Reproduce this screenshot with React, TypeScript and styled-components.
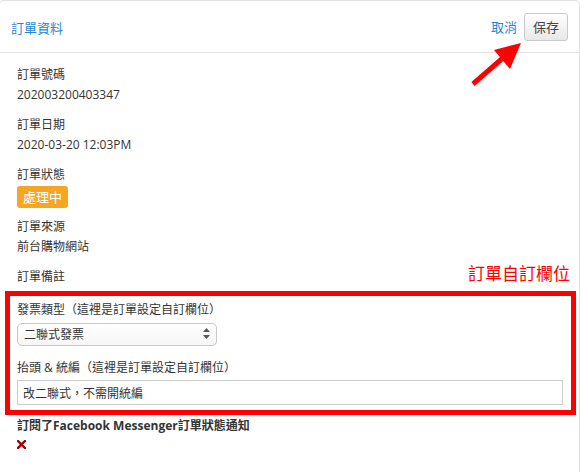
import React from 'react';
import styled, { createGlobalStyle } from 'styled-components';

const Global = createGlobalStyle`
  html, body {
    margin: 0;
    padding: 0;
    background: #fff;
  }
  body {
    font-family: "Open Sans", "Noto Sans CJK TC", sans-serif;
    color: #333;
  }
`;

const Panel = styled.div`
  position: relative;
  width: 581px;
  height: 480px;
  margin-left: -1px;
  box-sizing: border-box;
  border: 1px solid #e2e2e2;
  border-radius: 4px 4px 0 0;
  background: #fff;
`;

const Header = styled.div`
  display: flex;
  align-items: center;
  justify-content: space-between;
  height: 51px;
  padding: 0 11px 0 11px;
  border-bottom: 1px solid #e5e5e5;
`;

const Title = styled.div`
  font-size: 13px;
  color: #1f87d8;
  padding-top: 1px;
`;

const Actions = styled.div`
  display: flex;
  align-items: center;
  gap: 7px;
`;

const LinkButton = styled.span`
  font-size: 13px;
  color: #1f87d8;
  cursor: pointer;
`;

const SaveButton = styled.button`
  width: 44px;
  height: 28px;
  padding: 0;
  font-family: inherit;
  font-size: 13px;
  color: #444;
  background: linear-gradient(#fff, #e8e8e8);
  border: 1px solid #cacaca;
  border-radius: 3px;
  cursor: pointer;
`;

const Body = styled.div`
  padding: 12px 12px 0 17px;
`;

const Field = styled.div`
  margin-bottom: 10px;
`;

const LabelRow = styled.div`
  display: flex;
  align-items: center;
  justify-content: space-between;
`;

const Label = styled.div<{ $bold?: boolean }>`
  font-size: 12px;
  line-height: 20px;
  font-weight: ${(p) => (p.$bold ? 700 : 400)};
`;

const Value = styled.div`
  font-size: 12px;
  line-height: 20px;
`;

const Note = styled.div`
  font-size: 17px;
  line-height: 20px;
  color: #f00;
  margin-right: -3px;
  margin-top: -6px;
`;

const Badge = styled.span`
  display: inline-flex;
  align-items: center;
  height: 22px;
  padding: 0 6px;
  margin-bottom: -2px;
  font-size: 13px;
  color: #fff;
  background: #f5a623;
  border-radius: 3px;
`;

const CustomBox = styled.div`
  margin: 4px -9px 1px -12px;
  padding: 4px 8px 5px 7px;
  border: 5px solid #f00;
`;

const CustomField = styled.div<{ $last?: boolean }>`
  margin-bottom: ${(p) => (p.$last ? 0 : 12)}px;
`;

const InputLabel = styled.div`
  font-size: 12px;
  line-height: 20px;
  margin-bottom: 2px;
`;

const SelectWrap = styled.div`
  position: relative;
  width: 200px;
`;

const Select = styled.select`
  appearance: none;
  width: 100%;
  height: 23px;
  padding: 0 20px 0 6px;
  font-family: inherit;
  font-size: 12px;
  color: #333;
  background: linear-gradient(#fff, #f6f6f6);
  border: 1px solid #c8c8c8;
  border-radius: 5px;
  outline: none;
`;

const SelectArrows = styled.svg`
  position: absolute;
  right: 7px;
  top: 6px;
  pointer-events: none;
`;

const TextInput = styled.input`
  display: block;
  width: 100%;
  height: 25px;
  box-sizing: border-box;
  padding: 0 5px;
  font-family: inherit;
  font-size: 12px;
  color: #333;
  border: 1px solid #ccc;
  border-radius: 0;
  outline: none;
`;

const Cross = styled.svg`
  display: block;
  margin: 4px 0 0 0;
`;

const Pointer = styled.svg`
  position: absolute;
  left: 460px;
  top: 36px;
  pointer-events: none;
`;

const App: React.FC = () => {
  return (
    <>
      <Global />
      <Panel>
        <Header>
          <Title>訂單資料</Title>
          <Actions>
            <LinkButton>取消</LinkButton>
            <SaveButton>保存</SaveButton>
          </Actions>
        </Header>
        <Body>
          <Field>
            <Label>訂單號碼</Label>
            <Value>202003200403347</Value>
          </Field>
          <Field>
            <Label>訂單日期</Label>
            <Value>2020-03-20 12:03PM</Value>
          </Field>
          <Field>
            <Label>訂單狀態</Label>
            <Badge>處理中</Badge>
          </Field>
          <Field>
            <Label>訂單來源</Label>
            <Value>前台購物網站</Value>
          </Field>
          <LabelRow>
            <Label>訂單備註</Label>
            <Note>訂單自訂欄位</Note>
          </LabelRow>
          <CustomBox>
            <CustomField>
              <InputLabel>發票類型（這裡是訂單設定自訂欄位）</InputLabel>
              <SelectWrap>
                <Select defaultValue="two">
                  <option value="two">二聯式發票</option>
                  <option value="three">三聯式發票</option>
                </Select>
                <SelectArrows width="7" height="11" viewBox="0 0 7 11">
                  <path d="M3.5 0 L7 4 H0 Z M3.5 11 L0 7 H7 Z" fill="#555" />
                </SelectArrows>
              </SelectWrap>
            </CustomField>
            <CustomField $last>
              <InputLabel>抬頭 &amp; 統編（這裡是訂單設定自訂欄位）</InputLabel>
              <TextInput defaultValue="改二聯式，不需開統編" />
            </CustomField>
          </CustomBox>
          <Label $bold>訂閱了Facebook Messenger訂單狀態通知</Label>
          <Cross width="9" height="9" viewBox="0 0 9 9">
            <path d="M1 1 L8 8 M8 1 L1 8" stroke="#a30000" strokeWidth="2.4" strokeLinecap="square" />
          </Cross>
        </Body>
        <Pointer width="70" height="56" viewBox="0 0 70 56">
          <line x1="13" y1="47" x2="44" y2="20" stroke="#f00" strokeWidth="5" />
          <polygon points="61,6 34,13 50,32" fill="#f00" />
        </Pointer>
      </Panel>
    </>
  );
};

export default App;
